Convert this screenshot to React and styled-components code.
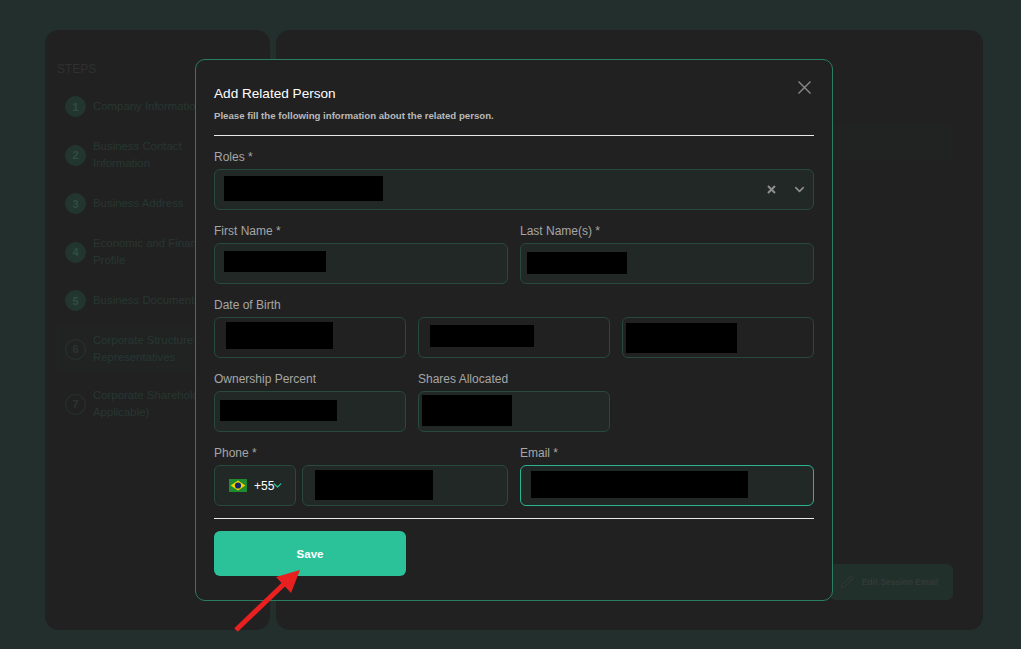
import React from 'react';
import styled, { createGlobalStyle } from 'styled-components';
import { ChevronDown, Pencil } from 'lucide-react';

const STEPS = [
  { num: 1, label: 'Company Information', filled: true },
  { num: 2, label: 'Business Contact Information', filled: true, narrow: true },
  { num: 3, label: 'Business Address', filled: true },
  { num: 4, label: 'Economic and Financial Profile', filled: true },
  { num: 5, label: 'Business Documents', filled: true },
  { num: 6, label: 'Corporate Structure & Representatives', active: true, narrow: true },
  { num: 7, label: 'Corporate Shareholders (If Applicable)' },
];

const App = () => {
  return (
    <Page>
      <GlobalStyle />
      <Sidebar>
        <StepsTitle>STEPS</StepsTitle>
        <StepList>
          {STEPS.map((step) => (
            <Step key={step.num} $active={step.active}>
              <StepNumber $filled={step.filled}>{step.num}</StepNumber>
              <StepLabel $narrow={step.narrow}>{step.label}</StepLabel>
            </Step>
          ))}
        </StepList>
      </Sidebar>

      <Main>
        <GhostRow />
        <EditButton>
          <Pencil size={14} strokeWidth={1.5} />
          Edit Session Email
        </EditButton>
      </Main>

      <Modal>
        <CloseButton aria-label="Close">
          <svg width="13" height="13" viewBox="0 0 13 13">
            <path d="M0.5 0.5 L12.5 12.5 M12.5 0.5 L0.5 12.5" stroke="#8a8a8a" strokeWidth="1.4" fill="none" />
          </svg>
        </CloseButton>
        <Title>Add Related Person</Title>
        <Subtitle>Please fill the following information about the related person.</Subtitle>
        <Divider $top={13} $bottom={14} />

        <FormGrid>
          <Field $span={6}>
            <Label>Roles *</Label>
            <InputBox $between>
              <Redacted $left={9} $top={6} $width={159} $height={25} />
              <SelectIcons>
                <svg width="9" height="9" viewBox="0 0 9 9">
                  <path d="M1 1 L8 8 M8 1 L1 8" stroke="#8f8f8f" strokeWidth="2" fill="none" />
                </svg>
                <ChevronDown size={15} color="#8f8f8f" strokeWidth={2.5} />
              </SelectIcons>
            </InputBox>
          </Field>

          <Field $span={3}>
            <Label>First Name *</Label>
            <InputBox>
              <Redacted $left={9} $top={7} $width={102} $height={21} />
            </InputBox>
          </Field>
          <Field $span={3}>
            <Label>Last Name(s) *</Label>
            <InputBox>
              <Redacted $left={6} $top={8} $width={100} $height={22} />
            </InputBox>
          </Field>

          <Field $span={2}>
            <Label>Date of Birth</Label>
            <InputBox $plain>
              <Redacted $left={11} $top={4} $width={107} $height={27} />
            </InputBox>
          </Field>
          <Field $span={2}>
            <Label>&nbsp;</Label>
            <InputBox $plain>
              <Redacted $left={11} $top={7} $width={104} $height={22} />
            </InputBox>
          </Field>
          <Field $span={2}>
            <Label>&nbsp;</Label>
            <InputBox $plain>
              <Redacted $left={3} $top={5} $width={111} $height={30} />
            </InputBox>
          </Field>

          <Field $span={2}>
            <Label>Ownership Percent</Label>
            <InputBox>
              <Redacted $left={5} $top={8} $width={117} $height={21} />
            </InputBox>
          </Field>
          <Field $span={2}>
            <Label>Shares Allocated</Label>
            <InputBox>
              <Redacted $left={3} $top={3} $width={90} $height={31} />
            </InputBox>
          </Field>
          <Spacer $span={2} />

          <Field $span={3}>
            <Label>Phone *</Label>
            <PhoneRow>
              <CountryPicker>
                <svg width="18" height="13" viewBox="0 0 18 13">
                  <rect width="18" height="13" fill="#1f8a2e" />
                  <path d="M9 1.4 L16.4 6.5 L9 11.6 L1.6 6.5 Z" fill="#f2d500" />
                  <circle cx="9" cy="6.5" r="3.1" fill="#14246a" />
                </svg>
                <DialCode>+55</DialCode>
                <DialChevron size={13} color="#2bc29a" strokeWidth={2.5} />
              </CountryPicker>
              <PhoneInput>
                <Redacted $left={12} $top={4} $width={118} $height={30} />
              </PhoneInput>
            </PhoneRow>
          </Field>
          <Field $span={3}>
            <Label>Email *</Label>
            <InputBox $focused>
              <Redacted $left={10} $top={5} $width={217} $height={27} />
            </InputBox>
          </Field>
        </FormGrid>

        <Divider $top={12} $bottom={12} />
        <SaveButton>Save</SaveButton>
      </Modal>

      <Arrow width="76" height="70" viewBox="0 0 76 70">
        <path d="M70 5 L46 12 L61 28 Z" fill="#e8201f" />
        <path d="M6 65 L55 18" stroke="#e8201f" strokeWidth="5" fill="none" />
      </Arrow>
    </Page>
  );
};

const GlobalStyle = createGlobalStyle`
  html, body {
    margin: 0;
    padding: 0;
    background: #222f2c;
    font-family: "Liberation Sans", Arial, sans-serif;
  }
`;

const Page = styled.div`
  position: relative;
  display: flex;
  gap: 6px;
  box-sizing: border-box;
  width: 1021px;
  height: 649px;
  padding: 30px 38px 19px 45px;
  background: #222f2c;
  overflow: hidden;
`;

const Sidebar = styled.aside`
  width: 225px;
  flex: none;
  box-sizing: border-box;
  padding: 32px 12px 0;
  background: #212121;
  border-radius: 14px;
  overflow: hidden;
`;

const StepsTitle = styled.div`
  font-size: 12px;
  line-height: 14px;
  color: #303030;
`;

const StepList = styled.div`
  display: flex;
  flex-direction: column;
  gap: 21px;
  margin-top: 20px;
`;

const Step = styled.div`
  display: flex;
  align-items: center;
  gap: 7px;
  padding: ${(p) => (p.$active ? '6px 0 6px 8px' : '0 0 0 8px')};
  margin: ${(p) => (p.$active ? '-6px 0' : '0')};
  background: ${(p) => (p.$active ? '#212322' : 'transparent')};
`;

const StepNumber = styled.div`
  flex: none;
  display: flex;
  align-items: center;
  justify-content: center;
  box-sizing: border-box;
  width: 21px;
  height: 21px;
  border-radius: 50%;
  font-size: 11px;
  font-weight: 700;
  background: ${(p) => (p.$filled ? '#22362f' : 'transparent')};
  border: 1px solid ${(p) => (p.$filled ? '#22362f' : '#263530')};
  color: ${(p) => (p.$filled ? '#2f4d44' : '#2a3531')};
`;

const StepLabel = styled.div`
  font-size: 11.4px;
  line-height: 17px;
  color: #273732;
  width: ${(p) => (p.$narrow ? '112px' : '148px')};
`;

const Main = styled.main`
  flex: 1;
  display: flex;
  flex-direction: column;
  align-items: flex-end;
  box-sizing: border-box;
  padding: 95px 30px 30px;
  background: #212121;
  border-radius: 14px;
`;

const GhostRow = styled.div`
  width: 280px;
  height: 35px;
  background: #212322;
`;

const EditButton = styled.button`
  display: flex;
  align-items: center;
  gap: 8px;
  height: 36px;
  margin-top: auto;
  padding: 0 15px 0 10px;
  border: none;
  border-radius: 6px;
  background: #22302c;
  color: #323a37;
  font-family: inherit;
  font-size: 8.5px;
  font-weight: 700;
`;

const Modal = styled.section`
  position: absolute;
  left: 195px;
  top: 59px;
  box-sizing: border-box;
  width: 638px;
  height: 542px;
  padding: 26px 18px 0;
  background: #212121;
  border: 1px solid #2a7d63;
  border-radius: 10px;
`;

const CloseButton = styled.button`
  position: absolute;
  top: 21px;
  right: 21px;
  display: flex;
  padding: 0;
  border: none;
  background: none;
`;

const Title = styled.h2`
  margin: 0;
  font-size: 13.6px;
  line-height: 16px;
  font-weight: 400;
  color: #ffffff;
`;

const Subtitle = styled.p`
  margin: 8px 0 0;
  font-size: 9.65px;
  line-height: 12px;
  font-weight: 700;
  color: #b9b9b9;
`;

const Divider = styled.hr`
  margin: ${(p) => p.$top}px 0 ${(p) => p.$bottom}px;
  height: 1px;
  border: none;
  background: #e8e8e8;
`;

const FormGrid = styled.div`
  display: grid;
  grid-template-columns: repeat(6, 1fr);
  column-gap: 12px;
  row-gap: 14px;
`;

const Field = styled.div`
  grid-column: span ${(p) => p.$span};
  display: flex;
  flex-direction: column;
  gap: 5px;
  min-width: 0;
`;

const Spacer = styled.div`
  grid-column: span ${(p) => p.$span};
`;

const Label = styled.label`
  font-size: 12px;
  line-height: 14px;
  color: #a6a6a6;
`;

const InputBox = styled.div`
  display: flex;
  align-items: flex-start;
  justify-content: ${(p) => (p.$between ? 'space-between' : 'flex-start')};
  box-sizing: border-box;
  height: 41px;
  min-width: 0;
  border-radius: 6px;
  border: 1px solid ${(p) => (p.$focused ? '#2bb592' : '#28493e')};
  background: ${(p) => (p.$plain ? '#212121' : '#212826')};
`;

const PhoneInput = styled(InputBox)`
  flex: 1;
`;

const Redacted = styled.div`
  flex: none;
  width: ${(p) => p.$width}px;
  height: ${(p) => p.$height}px;
  margin: ${(p) => p.$top}px 0 0 ${(p) => p.$left}px;
  background: #000000;
`;

const SelectIcons = styled.div`
  align-self: center;
  display: flex;
  align-items: center;
  gap: 16px;
  padding-right: 6px;
`;

const PhoneRow = styled.div`
  display: flex;
  gap: 6px;
`;

const CountryPicker = styled.div`
  flex: none;
  display: flex;
  align-items: center;
  box-sizing: border-box;
  width: 82px;
  height: 41px;
  padding-left: 14px;
  border-radius: 6px;
  border: 1px solid #28493e;
  background: #212826;
`;

const DialCode = styled.span`
  margin-left: 7px;
  font-size: 12px;
  color: #ffffff;
`;

const DialChevron = styled(ChevronDown)`
  margin-left: -3px;
`;

const SaveButton = styled.button`
  display: block;
  width: 192px;
  height: 45px;
  padding: 0;
  border: none;
  border-radius: 6px;
  background: #2bc29a;
  color: #ffffff;
  font-family: inherit;
  font-size: 11.5px;
  font-weight: 700;
`;

const Arrow = styled.svg`
  position: absolute;
  left: 230px;
  top: 565px;
`;

export default App;
